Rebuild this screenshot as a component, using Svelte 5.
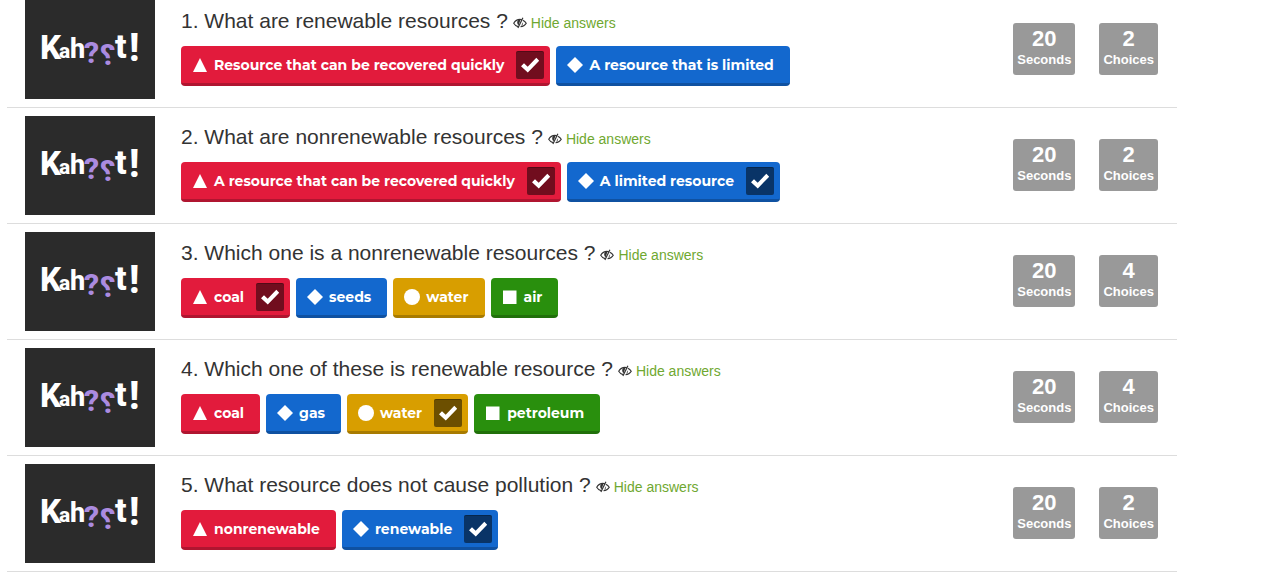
<script>
  const questions = [
    {
      title: "What are renewable resources ?",
      seconds: 20,
      answers: [
        { text: "Resource that can be recovered quickly", correct: true },
        { text: "A resource that is limited" },
      ],
    },
    {
      title: "What are nonrenewable resources ?",
      seconds: 20,
      answers: [
        { text: "A resource that can be recovered quickly", correct: true },
        { text: "A limited resource", correct: true },
      ],
    },
    {
      title: "Which one is a nonrenewable resources ?",
      seconds: 20,
      answers: [
        { text: "coal", correct: true },
        { text: "seeds" },
        { text: "water" },
        { text: "air" },
      ],
    },
    {
      title: "Which one of these is renewable resource ?",
      seconds: 20,
      answers: [
        { text: "coal" },
        { text: "gas" },
        { text: "water", correct: true },
        { text: "petroleum" },
      ],
    },
    {
      title: "What resource does not cause pollution ?",
      seconds: 20,
      answers: [{ text: "nonrenewable" }, { text: "renewable", correct: true }],
    },
  ];

  const shapes = ["triangle", "diamond", "circle", "square"];

  let hidden = $state(questions.map(() => false));
</script>

<ol class="questions">
  {#each questions as question, i}
    <li class="question">
      <svg class="cover" viewBox="0 0 130 99" role="img" aria-label="Kahoot!">
        <rect width="130" height="99" fill="#2b2b2b" />
        <g class="logo">
          <text x="15" y="59" font-size="33">K</text>
          <text x="34" y="58" font-size="21">a</text>
          <text x="45" y="58" font-size="27">h</text>
          <text class="mark" x="59" y="63" font-size="30">?</text>
          <text class="mark" transform="translate(90 65) scale(-1 1)" font-size="30">?</text>
          <text x="90" y="58" font-size="34">t</text>
          <text x="104" y="61" font-size="38">!</text>
        </g>
      </svg>

      <div class="body">
        <div class="heading">
          <h2>{i + 1}. {question.title}</h2>
          <button class="toggle" onclick={() => (hidden[i] = !hidden[i])}>
            <svg class="eye" viewBox="0 0 14 12" aria-hidden="true">
              <path
                d="M5 9.600C3 9 1.500 7.600.7 6.200 2 4 4.300 2.400 7 2.400c.7 0 1.300.1 1.900.3M9.800 3.200c1.500.7 2.700 1.800 3.500 3-1.200 2-3.200 3.400-5.800 3.600"
                fill="none"
                stroke="currentColor"
                stroke-width="1.100"
              />
              <path d="M7.500 2.600C5.200 2.400 4 4 4.200 5.700c.1 1.200.7 2 1.500 2.500z" fill="currentColor" />
              <path d="M9.900.8 4.900 11" stroke="currentColor" stroke-width="1.200" />
              <path d="M10 5.200c.4 1.500-.4 2.900-1.800 3.500z" fill="currentColor" />
            </svg>
            {hidden[i] ? "Show answers" : "Hide answers"}
          </button>
        </div>

        {#if !hidden[i]}
          <ul class="answers">
            {#each question.answers as answer, j}
              <li class="answer {shapes[j]}">
                <svg class="shape" viewBox="0 0 16 16" aria-hidden="true">
                  {#if j === 0}
                    <path d="M8 1l7 14H1z" />
                  {:else if j === 1}
                    <path d="M8 0l8 8-8 8-8-8z" />
                  {:else if j === 2}
                    <circle cx="8" cy="8" r="8" />
                  {:else}
                    <path d="M1 1.500h13.500V15H1z" />
                  {/if}
                </svg>
                <span>{answer.text}</span>
                {#if answer.correct}
                  <svg class="check" viewBox="0 0 28 28" role="img" aria-label="Correct">
                    <path d="M5 15.300l3-3 3.700 3.500 8.600-9 2.900 2.900-11.400 11.700z" />
                  </svg>
                {/if}
              </li>
            {/each}
          </ul>
        {/if}
      </div>

      <div class="stats">
        <div class="stat"><strong>{question.seconds}</strong>Seconds</div>
        <div class="stat"><strong>{question.answers.length}</strong>Choices</div>
      </div>
    </li>
  {/each}
</ol>

<style>
  :global(body) {
    background: #fff;
    color: #333;
    font-family: "Liberation Sans", Arial, sans-serif;
  }
  ol,
  ul {
    list-style: none;
    margin: 0;
    padding: 0;
  }
  .questions {
    margin: 0 93px 0 7px;
  }
  .question {
    display: flex;
    align-items: flex-start;
    padding: 8px 19px 8px 18px;
    border-bottom: 1px solid #ddd;
  }
  .question:first-child {
    padding-top: 0;
  }

  .cover {
    flex: none;
    width: 130px;
    height: 99px;
    margin-right: 26px;
  }
  .logo {
    font-family: Roboto, sans-serif;
    font-weight: 800;
    fill: #fff;
  }
  .mark {
    fill: #ab8be0;
  }

  .body {
    flex: 1;
    min-width: 0;
    padding-top: 8px;
  }
  .heading {
    display: flex;
    align-items: flex-end;
    gap: 5px;
  }
  h2 {
    margin: 0;
    font-size: 21px;
    font-weight: normal;
    line-height: 26px;
  }
  .toggle {
    display: flex;
    align-items: center;
    gap: 4px;
    padding: 0;
    border: 0;
    background: none;
    color: #6fa830;
    font: 14px/22px "Liberation Sans", Arial, sans-serif;
    cursor: pointer;
  }
  .eye {
    width: 14px;
    height: 12px;
    color: #333;
  }

  .answers {
    display: flex;
    flex-wrap: wrap;
    gap: 6px;
    margin-top: 12px;
  }
  .answer {
    display: flex;
    align-items: center;
    box-sizing: border-box;
    height: 40px;
    padding: 0 16px 0 11px;
    border-bottom: 3px solid;
    border-radius: 4px;
    color: #fff;
    font: 700 14px/20px Montserrat, Inter, sans-serif;
  }
  .answer:has(.check) {
    padding-right: 6px;
  }
  .triangle {
    background: #e21b3c;
    border-color: #b01530;
  }
  .diamond {
    background: #1368ce;
    border-color: #0f51a1;
  }
  .circle {
    background: #d89e00;
    border-color: #a87b00;
  }
  .square {
    background: #298f0d;
    border-color: #20700a;
  }
  .shape {
    width: 16px;
    height: 16px;
    margin-right: 6px;
    fill: #fff;
  }
  .check {
    width: 28px;
    height: 28px;
    margin-left: 12px;
    border-radius: 2px;
    background: rgba(0, 0, 0, 0.5);
    box-shadow: inset 0 1px 0 rgba(0, 0, 0, 0.25);
    fill: #fff;
  }

  .stats {
    display: flex;
    gap: 24px;
    padding-top: 23px;
  }
  .stat {
    box-sizing: border-box;
    height: 52px;
    padding: 4px;
    border-radius: 3px;
    background: #999;
    color: #fff;
    font-size: 13px;
    font-weight: bold;
    line-height: 18px;
    text-align: center;
  }
  .stat strong {
    display: block;
    font-size: 22px;
    line-height: 24px;
  }
</style>
